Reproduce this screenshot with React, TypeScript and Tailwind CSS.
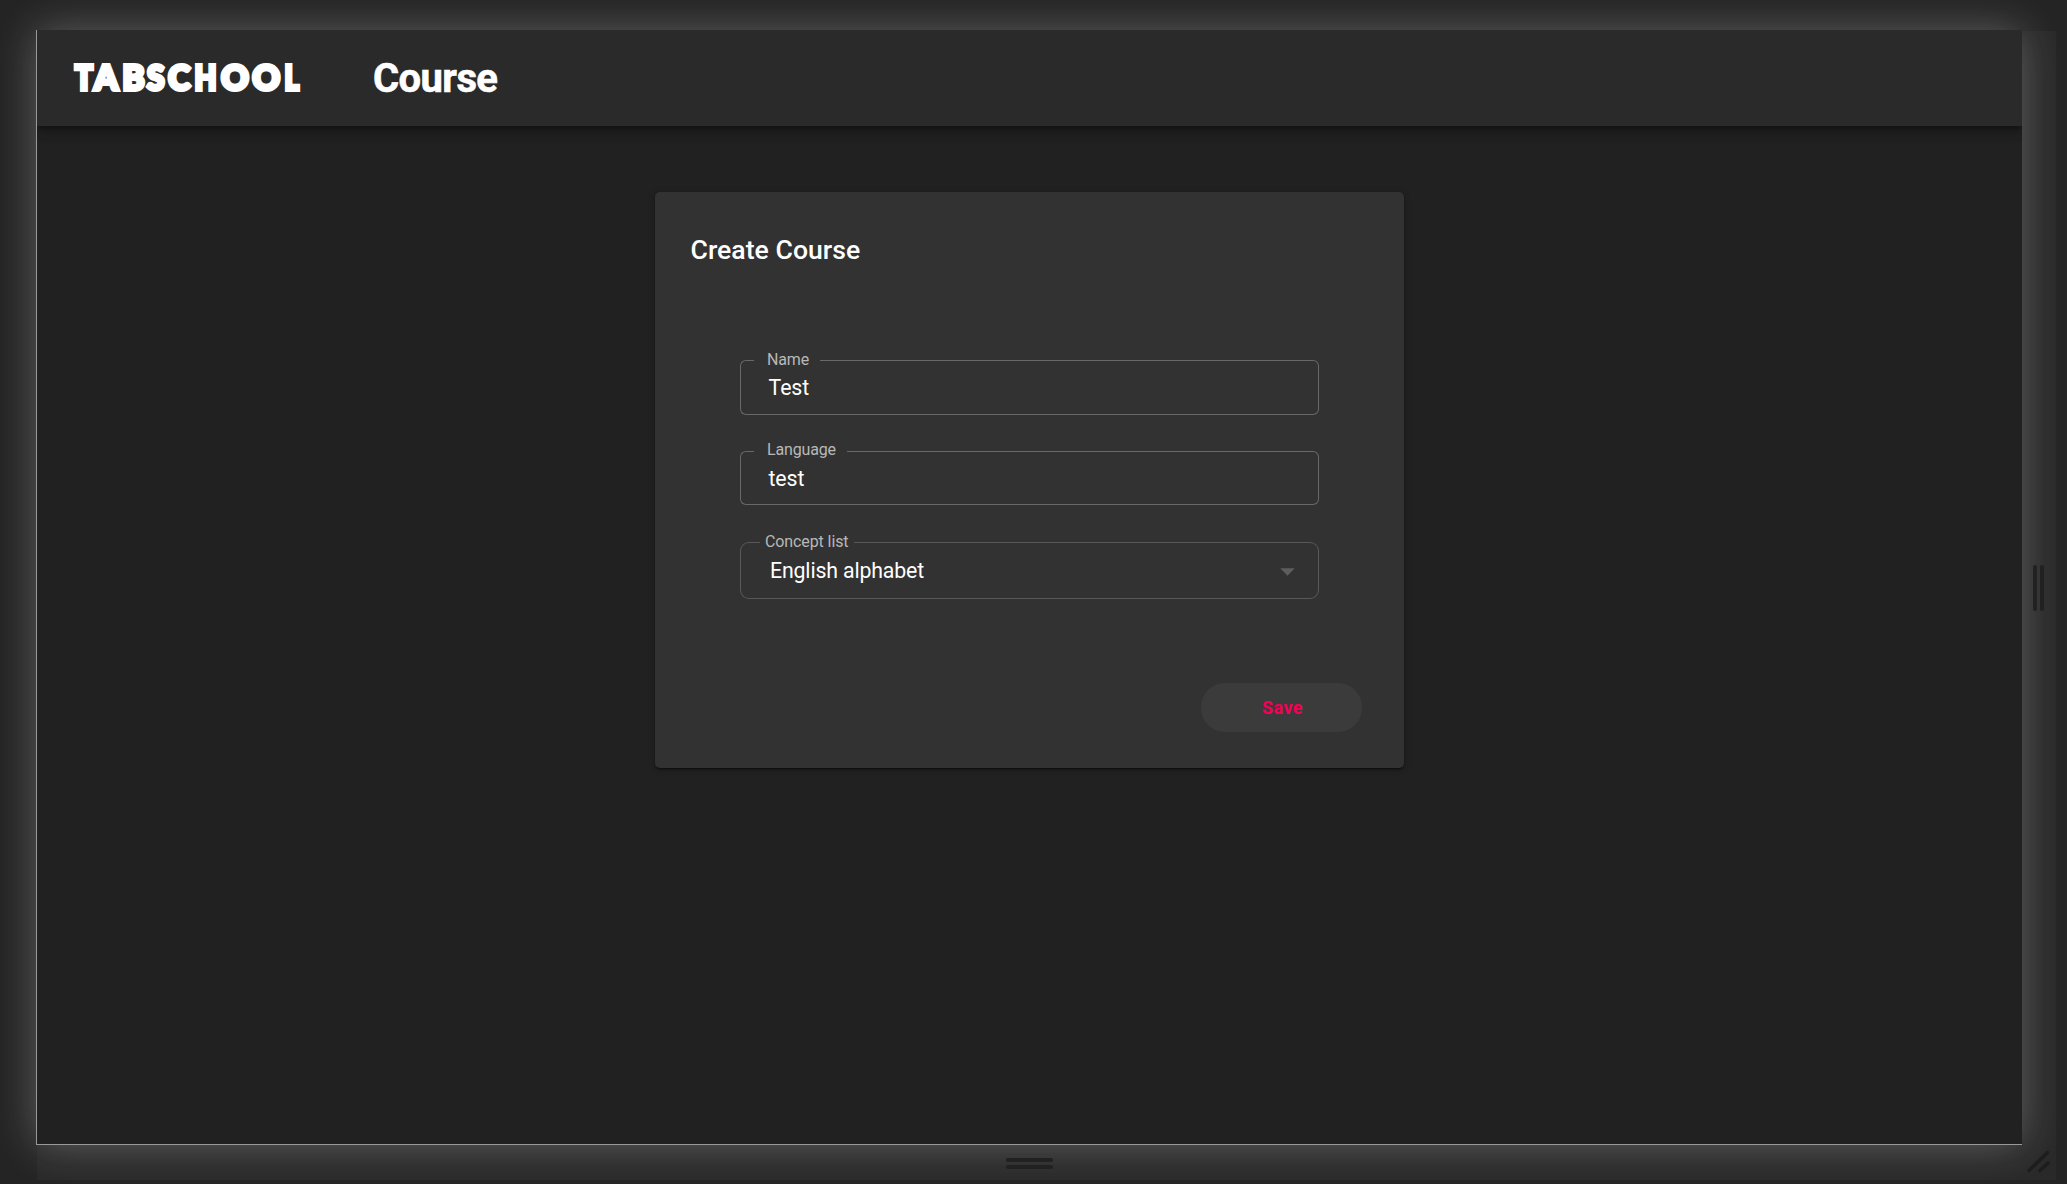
type FieldProps = {
  label: string;
  value: string;
  box: string;
  left: string;
  notch: string;
  right: string;
  line: string;
  labelText: string;
  valueText: string;
  arrow?: boolean;
};

function Field({ label, value, box, left, notch, right, line, labelText, valueText, arrow }: FieldProps) {
  return (
    <div className={`relative flex w-[579px] ${box}`}>
      <div className={`shrink-0 border-y border-l ${line} ${left}`} />
      <div className={`shrink-0 border-b ${line} ${notch}`} />
      <div className={`grow border-y border-r ${line} ${right}`} />
      <span className={`absolute whitespace-nowrap text-[16px] leading-5 text-[#b8b8b8] ${labelText}`}>{label}</span>
      <span className={`absolute whitespace-nowrap text-[21.3px] leading-7 text-white ${valueText}`}>{value}</span>
      {arrow && (
        <svg className="absolute left-[540px] top-[25.5px]" width="15" height="8" viewBox="0 0 15 8">
          <path d="M0.3 0.3H14.7L7.5 7.7Z" fill="#5d5d5d" />
        </svg>
      )}
    </div>
  );
}

const letters: [string, number, number][] = [
  ["T", 0.9, 17.8],
  ["A", 20.2, 23.6],
  ["B", 48.4, 22],
  ["S", 73, 17.4],
  ["C", 94.3, 21.8],
  ["H", 120.6, 22],
  ["O", 147.2, 27.4],
  ["O", 178.6, 27.4],
  ["L", 210.6, 14.4],
];

function Logo() {
  return (
    <svg className="block overflow-visible" width="228" height="32" viewBox="0 0 228 32">
      <text
        y="28"
        fill="white"
        stroke="white"
        strokeWidth="4"
        strokeLinejoin="miter"
        strokeMiterlimit="2"
        fontFamily="Lato, sans-serif"
        fontWeight="900"
        fontSize="34"
      >
        {letters.map(([letter, x, width]) => (
          <tspan key={x} x={x} textLength={width} lengthAdjust="spacingAndGlyphs">
            {letter}
          </tspan>
        ))}
      </text>
    </svg>
  );
}

export default function App() {
  return (
    <div className="flex h-[1184px] w-[2067px] flex-col overflow-hidden bg-[#242424] pl-9 pt-[30px] font-[Roboto,sans-serif]">
      <div className="flex h-[1115px]">
        <main className="relative z-10 flex w-[1986px] shrink-0 flex-col border-b border-l border-[#999999] bg-[#212121] shadow-[0_0_40px_rgba(255,255,255,0.27)]">
          <header className="flex h-24 shrink-0 items-center bg-[#2a2a2a] pl-[37px] shadow-[0_3px_5px_-1px_rgba(0,0,0,0.3),0_6px_10px_rgba(0,0,0,0.18),0_1px_18px_rgba(0,0,0,0.12)] [clip-path:inset(0_0_-30px_0)]">
            <Logo />
            <h1 className="ml-[71px] pt-px text-[40px] font-bold leading-[48px] tracking-[-0.6px] text-white [-webkit-text-stroke:0.6px_white]">Course</h1>
          </header>
          <section className="ml-[618px] mt-[66px] flex h-[576px] w-[749px] flex-col rounded-[5px] bg-[#323232] shadow-[0_3px_1px_-2px_rgba(0,0,0,0.3),0_2px_3px_rgba(0,0,0,0.24),0_1px_7px_rgba(0,0,0,0.18)]">
            <h2 className="ml-[35.5px] mt-10 text-[26.6px] font-medium leading-9 tracking-[0.03px] text-white">Create Course</h2>
            <div className="ml-[85px] mt-[92px] flex flex-col">
              <Field label="Name" value="Test" box="h-[55px]" line="border-[#686868]" left="w-3.5 rounded-l-[6px]" notch="w-[66px]" right="rounded-r-[6px]" labelText="left-[27px] top-[-10px] tracking-[-0.15px]" valueText="left-[28.5px] top-[14px] tracking-[-0.05px]" />
              <Field label="Language" value="test" box="mt-9 h-[54px]" line="border-[#686868]" left="w-3.5 rounded-l-[6px]" notch="w-[93px]" right="rounded-r-[6px]" labelText="left-[27px] top-[-11px] tracking-[-0.15px]" valueText="left-[28.5px] top-[14px] tracking-[-0.1px]" />
              <Field label="Concept list" value="English alphabet" box="mt-[37px] h-[57px]" line="border-[#595959]" left="w-5 rounded-l-[9px]" notch="w-[94px]" right="rounded-r-[9px]" labelText="left-[25px] top-[-10px] tracking-[-0.1px]" valueText="left-[30px] top-[15px] tracking-[-0.15px]" arrow />
            </div>
            <button className="ml-[546px] mt-[84px] h-[49px] w-[161px] rounded-[24px] bg-[#3b3b3b] pl-0.5 text-[18px] font-bold tracking-[0.45px] text-[#f50057]">Save</button>
          </section>
        </main>
        <div className="relative z-20 mt-px flex w-[34px] items-center gap-[3px] bg-white/[0.025] pl-[11px]">
          <i className="h-[46px] w-1 rounded-sm bg-[#212121]" />
          <i className="h-[46px] w-1 rounded-sm bg-[#212121]" />
        </div>
      </div>
      <div className="relative z-20 ml-px flex h-[35px] w-[2019px] bg-white/[0.025]">
        <div className="flex w-[1985px] flex-col items-start pl-[969px] pt-[13px]">
          <i className="h-1 w-[47px] rounded-sm bg-[#212121]" />
          <i className="mt-[3px] h-1 w-[47px] rounded-sm bg-[#212121]" />
        </div>
        <svg width="34" height="35" viewBox="0 0 34 35" fill="none" stroke="#1d1d1d" strokeWidth="3.4" strokeLinecap="round">
          <path d="M7 25.5L25.5 7.5M18 25.5L26 18" />
        </svg>
      </div>
    </div>
  );
}
